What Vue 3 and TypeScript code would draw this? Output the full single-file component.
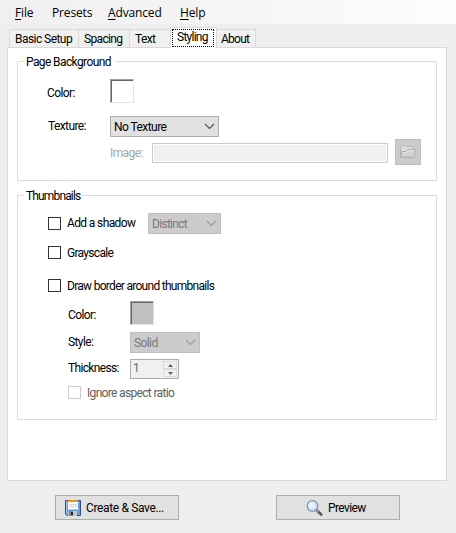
<script setup lang="ts">
import { ref } from 'vue'

interface MenuEntry { key: string; rest: string; accel: boolean; cls: string }
interface Tab { label: string; cls: string }

const menus: MenuEntry[] = [
  { key: 'F', rest: 'ile', accel: true, cls: 'm-file' },
  { key: 'P', rest: 'resets', accel: false, cls: 'm-presets' },
  { key: 'A', rest: 'dvanced', accel: true, cls: 'm-advanced' },
  { key: 'H', rest: 'elp', accel: true, cls: 'm-help' },
]
const tabs: Tab[] = [
  { label: 'Basic Setup', cls: 't-basic' },
  { label: 'Spacing', cls: 't-spacing' },
  { label: 'Text', cls: 't-text' },
  { label: 'Styling', cls: 't-styling' },
  { label: 'About', cls: 't-about' },
]
const active = ref('Styling')
const shadow = ref(false)
const grayscale = ref(false)
const border = ref(false)
</script>

<template>
  <main class="window">
    <nav class="menubar">
      <span v-for="m in menus" :key="m.rest" class="menu" :class="m.cls"><span :class="{ accel: m.accel }">{{ m.key }}</span>{{ m.rest }}</span>
    </nav>

    <div class="tabs">
      <div v-for="t in tabs" :key="t.label" class="tab" :class="[t.cls, { active: active === t.label }]" @click="active = t.label">
        <span class="tab-label">{{ t.label }}</span>
      </div>
    </div>

    <section class="panel">
      <div class="group background">
        <div class="legend"><span class="lg-page">Page Background</span></div>
        <div class="row r-color">
          <span class="label">Color:</span>
          <span class="swatch"></span>
        </div>
        <div class="row r-texture">
          <span class="label">Texture:</span>
          <div class="select s-texture">
            <span class="wide">No Texture</span>
            <svg width="11" height="7" viewBox="0 0 11 7"><path d="M1 1l4.5 4.5L10 1" /></svg>
          </div>
        </div>
        <div class="row r-image">
          <span class="label faint">Image:</span>
          <span class="path-box"></span>
          <span class="browse">
            <svg width="16" height="14" viewBox="0 0 16 14">
              <path d="M.5 12.5V1.5l1-1h4l1 1h7v4" fill="#dadada" stroke="#b2b2b2" />
              <path d="M.8 12.3L2 6.5h4l2-2h7.5l-1.3 7.8z" fill="#d3d3d3" stroke="#b0b0b0" />
              <path d="M1 12.5h13" stroke="#b5b5b5" stroke-width="1.5" />
              <path d="M3 7.5h3.5l2-2H14" fill="none" stroke="#e4e4e4" />
            </svg>
          </span>
        </div>
      </div>

      <div class="group thumbs">
        <div class="legend"><span class="lg-thumb">Thumbnails</span></div>
        <div class="row r-shadow">
          <span class="check" @click="shadow = !shadow"></span>
          <span class="label c-shadow">Add a shadow</span>
          <div class="select s-shadow disabled">
            <span>Distinct</span>
            <svg width="11" height="7" viewBox="0 0 11 7"><path d="M1 1l4.5 4.5L10 1" /></svg>
          </div>
        </div>
        <div class="row r-gray">
          <span class="check" @click="grayscale = !grayscale"></span>
          <span class="label c-gray">Grayscale</span>
        </div>
        <div class="row r-border">
          <span class="check" @click="border = !border"></span>
          <span class="label c-border">Draw border around thumbnails</span>
        </div>
        <div class="row sub r-bcolor">
          <span class="label">Color:</span>
          <span class="swatch gray"></span>
        </div>
        <div class="row sub r-style">
          <span class="label">Style:</span>
          <div class="select s-style disabled">
            <span>Solid</span>
            <svg width="11" height="7" viewBox="0 0 11 7"><path d="M1 1l4.5 4.5L10 1" /></svg>
          </div>
        </div>
        <div class="row sub r-thick">
          <span class="label">Thickness:</span>
          <div class="spin">
            <span class="num">1</span>
            <div class="arrows">
              <span><svg width="5" height="3" viewBox="0 0 5 3"><path d="M0 3L2.5 0 5 3z" /></svg></span>
              <span><svg width="5" height="3" viewBox="0 0 5 3"><path d="M0 0L2.5 3 5 0z" /></svg></span>
            </div>
          </div>
        </div>
        <div class="row sub r-ratio">
          <span class="check off"></span>
          <span class="label c-ratio">Ignore aspect ratio</span>
        </div>
      </div>
    </section>

    <footer class="actions">
      <button class="create">
        <svg width="16" height="16" viewBox="0 0 16 16">
          <path d="M.5.5h15v15H2L.5 14z" fill="#6c9bd2" stroke="#294f87" />
          <path d="M1.5 1v13" stroke="#a5c7ec" />
          <path d="M3 1h10v8H3z" fill="#fbfbf8" />
          <path d="M3 0h10v2H3z" fill="#f0921e" />
          <path d="M4 4.5h8M4 6.5h8" stroke="#d2d5d8" />
          <path d="M2 9.5h12" stroke="#a9c8e9" />
          <path d="M3 11h9v5H3z" fill="#c5c8cc" />
          <path d="M4 11h4v5H4z" fill="#85898d" />
          <path d="M6 12h2v3H6z" fill="#24282d" />
        </svg>
        <span class="b-create">Create &amp; Save...</span>
      </button>
      <button class="preview">
        <svg width="17" height="16" viewBox="0 0 17 16">
          <defs>
            <radialGradient id="lens" cx=".4" cy=".4" r=".65">
              <stop offset="0" stop-color="#fafdff" /><stop offset="1" stop-color="#bcd3f7" />
            </radialGradient>
          </defs>
          <path d="M10.5 10l4.7 4.5" stroke="#555" stroke-width="2.6" stroke-linecap="round" />
          <path d="M10.5 10l2 2" stroke="#aaa" stroke-width="1.4" />
          <circle cx="6.5" cy="6" r="5.3" fill="url(#lens)" stroke="#8796a8" stroke-width="1.3" />
        </svg>
        <span class="b-preview">Preview</span>
      </button>
    </footer>
  </main>
</template>

<style>
body { margin: 0; background: #efefef; }
</style>

<style scoped>
* { box-sizing: border-box; }
.window { width: 456px; height: 533px; background: #efefef; overflow: hidden; font: 12px/14px Roboto, "Liberation Sans", sans-serif; color: #000; letter-spacing: -0.6px; white-space: nowrap; }
.menubar { height: 24px; display: flex; padding: 4px 0 0 15px; background: linear-gradient(90deg, #f0f0f0, #f5f5f5 50%, #fdfdfd); font: 12px/17px "Open Sans", "Noto Sans", sans-serif; letter-spacing: -0.15px; }
.accel { text-decoration: underline; text-underline-offset: 2px; text-decoration-thickness: 1px; }
.m-file { width: 37px; }
.m-presets { width: 56px; }
.m-advanced { width: 72px; }
.tabs { height: 23px; display: flex; align-items: flex-end; padding-left: 9px; }
.tab { height: 18px; border: 1px solid #d9d9d9; border-bottom: 0; margin-right: -1px; padding: 2px 0 0 5px; background: #f0f0f0; }
.t-basic { width: 70px; letter-spacing: -0.55px; }
.t-spacing { width: 52px; letter-spacing: -0.65px; }
.t-text { width: 42px; padding-left: 5px; }
.t-styling { width: 47px; letter-spacing: -0.75px; }
.t-about { width: 40px; padding-left: 4px; letter-spacing: -0.75px; }
.tab.active { height: 21px; background: #fff; margin-bottom: -1px; padding: 1px 2px 1px 1px; z-index: 1; }
.active .tab-label { display: block; width: 42px; height: 18px; border: 1px dotted #000; padding: 0 0 0 4px; line-height: 15px; }
.panel { margin-left: 7px; width: 440px; height: 434px; background: #fff; border: 1px solid #d9d9d9; padding: 13px 9px 0; }
.group { width: 420px; border: 1px solid #dcdcdc; }
.background { height: 120px; }
.thumbs { height: 225px; margin-top: 14px; }
.legend { height: 14px; margin-top: -7px; padding-left: 6px; }
.legend span { display: inline-block; background: #fff; padding: 0 2px; }
.lg-page { width: 91px; letter-spacing: -0.6px; }
.lg-thumb { width: 58px; letter-spacing: -0.85px; }
.row { display: flex; align-items: center; padding-left: 30px; }
.row.sub { padding-left: 50px; }
.label { flex: none; }
.swatch { flex: none; width: 24px; height: 24px; background: #fff; border: 1px solid; border-color: #a0a0a0 #e3e3e3 #e3e3e3 #a0a0a0; box-shadow: inset 1px 1px #696969; }
.swatch.gray { background: #c0c0c0; }
.r-color { height: 24px; margin-top: 10px; }
.background .r-color, .background .r-texture { padding-left: 29px; }
.r-color .label, .r-texture .label { width: 63px; }
.r-color .label { padding-top: 3px; }
.r-texture .label { padding: 0 0 2px 1px; }
.r-texture { height: 21px; margin-top: 13px; }
.r-image { height: 26px; margin-top: 2px; padding-left: 92px; }
.r-image .label { width: 42px; padding-top: 1px; }
.faint { color: #a5a5a5; }
.select { flex: none; height: 21px; display: flex; align-items: center; justify-content: space-between; padding: 1px 3px 0 3px; border: 1px solid #adadad; background: #e1e1e1; }
.wide { letter-spacing: -0.55px; }
.select svg { margin-top: -1px; }
.select path { fill: none; stroke: #555; stroke-width: 1.2; }
.select.disabled { color: #797979; background: #ccc; border-color: #bfbfbf; }
.select.disabled path { stroke: #9c9c9c; }
.s-texture { width: 109px; }
.s-shadow { width: 73px; }
.s-shadow span { letter-spacing: -0.7px; }
.s-style { width: 70px; }
.path-box { width: 236px; height: 20px; background: #f0f0f0; border: 1px solid #ccc; box-shadow: inset 0 0 0 1px #fff; margin-top: 2px; }
.browse { width: 26px; height: 26px; margin-left: 7px; display: flex; align-items: center; justify-content: center; background: #ccc; border: 1px solid #bfbfbf; }
.check { flex: none; width: 13px; height: 13px; border: 1px solid #333; background: #fff; margin-right: 6px; }
.check.off { border-color: #ccc; }
.r-shadow { height: 21px; margin-top: 10px; }
.r-shadow .check { margin-top: -1px; }
.c-shadow { width: 81px; padding-bottom: 2px; letter-spacing: -0.62px; }
.r-gray { height: 13px; margin-top: 12px; }
.c-gray { letter-spacing: -0.7px; }
.r-border { height: 13px; margin-top: 20px; }
.c-border { letter-spacing: -0.71px; }
.r-bcolor { height: 24px; margin-top: 9px; }
.sub > .label:first-child { width: 62px; }
.r-bcolor .label { padding-top: 4px; }
.r-style { height: 21px; margin-top: 7px; }
.r-style .label { padding-bottom: 2px; }
.r-thick { height: 20px; margin-top: 6px; }
.r-thick .label { padding-bottom: 2px; letter-spacing: -0.65px; }
.spin { width: 49px; height: 20px; border: 1px solid #abadb3; background: #f0f0f0; padding: 1px 1px 1px 2px; display: flex; justify-content: space-between; }
.num { color: #6d6d6d; }
.arrows { width: 14px; display: grid; grid-template-rows: 8px 8px; }
.arrows span { display: flex; align-items: center; justify-content: center; border: 1px solid #dcdcdc; background: #f0f0f0; }
.arrows path { fill: #606060; }
.r-ratio { height: 13px; margin-top: 7px; }
.c-ratio { color: #606060; letter-spacing: -0.67px; }
.actions { display: flex; padding: 14px 0 0 55px; gap: 97px; }
button { width: 124px; height: 25px; padding: 0; border: 1px solid #adadad; background: #e1e1e1; font: inherit; color: inherit; letter-spacing: inherit; display: flex; align-items: center; }
.create { padding-left: 9px; gap: 5px; letter-spacing: -0.35px; }
.preview { padding-left: 29px; gap: 5px; }
</style>
